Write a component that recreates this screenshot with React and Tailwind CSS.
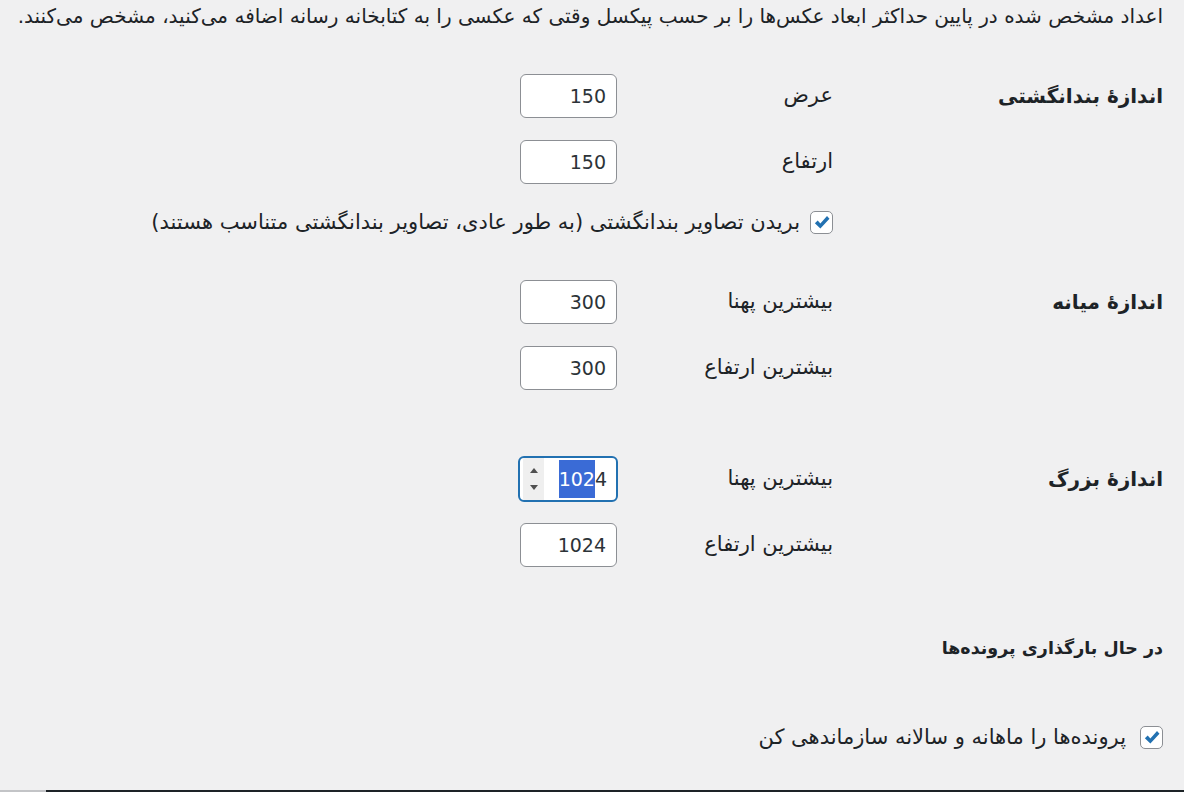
import React from 'react';

function Check() {
  return (
    <span className="flex h-[23px] w-[23px] shrink-0 items-center justify-center rounded-[5px] border border-[#8c8f94] bg-white">
      <svg width="19" height="19" viewBox="0 0 20 20">
        <path d="M3 10.8 L6 7.9 L8.8 11 L15.8 3.2 L18.4 6 L8.8 16.4 Z" fill="#2271b1" />
      </svg>
    </span>
  );
}

function NumInput({ value }) {
  return (
    <div className="flex h-[44px] w-[97px] shrink-0 items-center justify-start rounded-[6px] border border-[#8c8f94] bg-white pr-[10px] text-[19px] text-[#2c3338]">
      {value}
    </div>
  );
}

function FocusedInput() {
  return (
    <div className="mr-[-1px] flex h-[46px] w-[100px] shrink-0 flex-row-reverse items-center overflow-hidden rounded-[6px] border-2 border-[#2271b1] bg-white text-[19px] text-[#2c3338]">
      <div className="ml-[3px] flex h-full w-[21px] flex-col items-center justify-center gap-[12px] bg-[#efefef]">
        <span className="block h-0 w-0 border-x-[4px] border-b-[5px] border-x-transparent border-b-[#505050]"></span>
        <span className="block h-0 w-0 border-x-[4px] border-t-[5px] border-x-transparent border-t-[#505050]"></span>
      </div>
      <div className="flex flex-1 justify-end pr-[9px]" dir="ltr">
        <span className="flex h-[38px] items-center bg-[#3a6bd6] text-white">102</span>
        <span className="flex h-[38px] items-center">4</span>
      </div>
    </div>
  );
}

function Row({ label, children }) {
  return (
    <div className="flex h-[44px] items-center">
      <div className="w-[216px] shrink-0 text-[21px] text-[#1d2327]">{label}</div>
      {children}
    </div>
  );
}

function Section({ title, className, children }) {
  return (
    <div className={'flex ' + className}>
      <div className="w-[330px] shrink-0 text-[20px] font-bold leading-[44px] text-[#1d2327]">{title}</div>
      <div className="flex flex-col">{children}</div>
    </div>
  );
}

export default function App() {
  return (
    <div dir="rtl" className="flex h-[792px] flex-col overflow-hidden bg-[#f0f0f1] font-['DejaVu_Sans',sans-serif] text-[#1d2327]">
      <div className="px-[21px]">
        <p className="h-[26px] pt-[4px] text-[20px] leading-[24px] whitespace-nowrap">
          اعداد مشخص شده در پایین حداکثر ابعاد عکس‌ها را بر حسب پیکسل وقتی که عکسی را به کتابخانه رسانه اضافه می‌کنید، مشخص می‌کنند.
        </p>

        <Section title="اندازهٔ بندانگشتی" className="mt-[48px]">
          <Row label="عرض"><NumInput value="150" /></Row>
          <div className="mt-[22px]">
            <Row label="ارتفاع"><NumInput value="150" /></Row>
          </div>
          <label className="mt-[27px] flex h-[23px] items-center gap-[10px] whitespace-nowrap text-[21px] leading-[23px]">
            <Check />
            <span>بریدن تصاویر بندانگشتی (به طور عادی، تصاویر بندانگشتی متناسب هستند)</span>
          </label>
        </Section>

        <Section title="اندازهٔ میانه" className="mt-[46px]">
          <Row label="بیشترین پهنا"><NumInput value="300" /></Row>
          <div className="mt-[22px]">
            <Row label="بیشترین ارتفاع"><NumInput value="300" /></Row>
          </div>
        </Section>

        <Section title="اندازهٔ بزرگ" className="mt-[67px]">
          <Row label="بیشترین پهنا"><FocusedInput /></Row>
          <div className="mt-[22px]">
            <Row label="بیشترین ارتفاع"><NumInput value="1024" /></Row>
          </div>
        </Section>

        <h2 className="mt-[67px] h-[28px] text-[17.5px] font-bold leading-[28px]">در حال بارگذاری پرونده‌ها</h2>

        <label className="mt-[64px] flex h-[23px] items-center gap-[14px] text-[21px] leading-[23px]">
          <Check />
          <span>پرونده‌ها را ماهانه و سالانه سازماندهی کن</span>
        </label>
      </div>

      <div className="mt-auto flex h-[2px]">
        <div className="flex-1 bg-[#1d2327]"></div>
        <div className="w-[46px] bg-[#c3c4c7]"></div>
      </div>
    </div>
  );
}
